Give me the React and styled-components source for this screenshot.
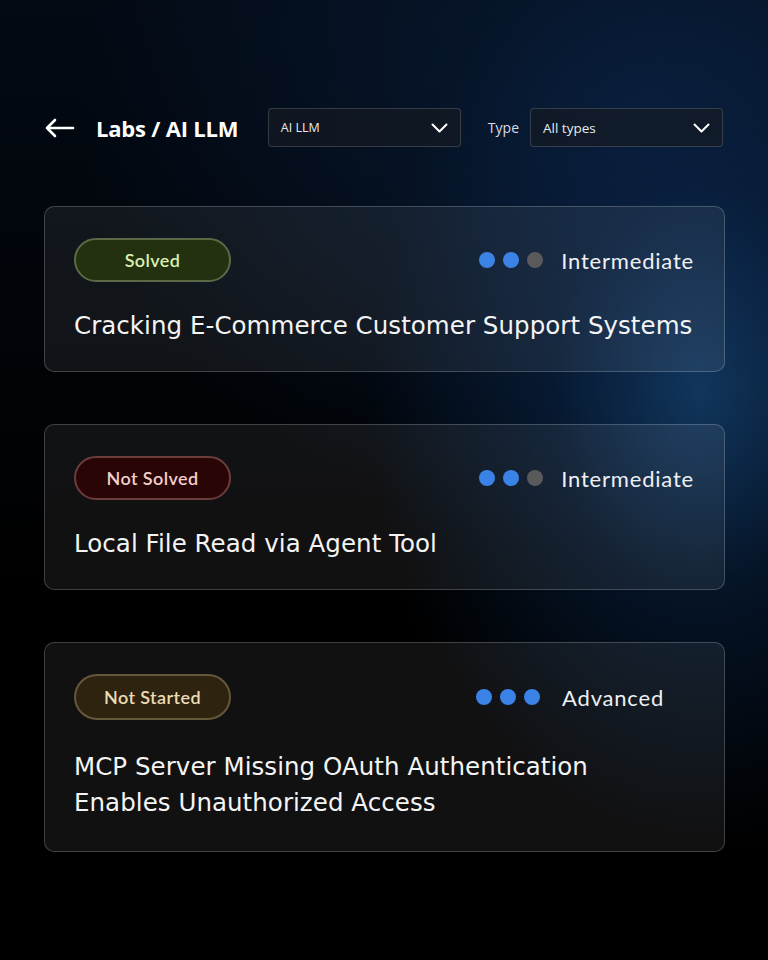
import styled, { createGlobalStyle } from 'styled-components'

const GlobalStyle = createGlobalStyle`
  html, body {
    margin: 0;
    padding: 0;
    background: #000;
  }
  * { box-sizing: border-box; }
`

const labs = [
  {
    status: 'solved',
    label: 'Solved',
    level: 2,
    levelName: 'Intermediate',
    title: 'Cracking E-Commerce Customer Support Systems',
  },
  {
    status: 'failed',
    label: 'Not Solved',
    level: 2,
    levelName: 'Intermediate',
    title: 'Local File Read via Agent Tool',
  },
  {
    status: 'pending',
    label: 'Not Started',
    level: 3,
    levelName: 'Advanced',
    title: 'MCP Server Missing OAuth Authentication Enables Unauthorized Access',
  },
]

const badgeColors = {
  solved: { bg: '#233110', border: '#5b6a45', text: '#d9efb0' },
  failed: { bg: '#2a0505', border: '#6b3d3b', text: '#f2cfcc' },
  pending: { bg: '#2e230f', border: '#65573a', text: '#eadbb6' },
}

const Page = styled.div`
  width: 768px;
  height: 960px;
  padding: 108px 43px 0 44px;
  font-family: 'Open Sans', 'Liberation Sans', sans-serif;
  color: #fff;
  background:
    radial-gradient(ellipse 330px 460px at 700px 390px, rgba(20, 64, 110, 0.8) 0%, rgba(10, 38, 75, 0.5) 45%, rgba(0, 0, 0, 0) 100%),
    radial-gradient(ellipse 560px 440px at 640px 110px, rgba(10, 32, 64, 0.75) 0%, rgba(0, 0, 0, 0) 100%),
    linear-gradient(180deg, #030a14 0%, #000 60%, #000 100%);
`

const Header = styled.header`
  display: flex;
  align-items: center;
  justify-content: space-between;
  height: 39px;
  padding-right: 2px;
  margin-bottom: 59px;
`

const TitleGroup = styled.div`
  display: flex;
  align-items: center;
  gap: 21px;
`

const BackButton = styled.button`
  display: flex;
  align-items: center;
  padding: 0 0 0 1px;
  background: none;
  border: none;
  cursor: pointer;
`

const PageTitle = styled.h1`
  margin: 0;
  font-family: 'Open Sans', sans-serif;
  font-size: 22px;
  font-weight: 700;
  letter-spacing: -0.2px;
`

const Filters = styled.div`
  display: flex;
  align-items: center;
`

const FilterLabel = styled.span`
  font-size: 14px;
  color: #d8dce2;
  margin: 0 11px 0 27px;
`

const Select = styled.div`
  display: flex;
  align-items: center;
  justify-content: space-between;
  width: 193px;
  height: 39px;
  padding: 0 12px 0 12px;
  border: 1px solid rgba(255, 255, 255, 0.16);
  border-radius: 4px;
  background: rgba(20, 26, 34, 0.7);
  font-size: ${({ $small }) => ($small ? '12.5px' : '13.5px')};
  color: #e8ebef;
`

const List = styled.div`
  display: flex;
  flex-direction: column;
  gap: 52px;
`

const Card = styled.article`
  padding: 31px 30px ${({ $tall }) => ($tall ? 30 : 27)}px 29px;
  border: 1px solid rgba(255, 255, 255, 0.2);
  border-radius: 10px;
  background: rgba(255, 255, 255, 0.065);
`

const CardTop = styled.div`
  display: flex;
  align-items: center;
  justify-content: space-between;
  margin-bottom: ${({ $tall }) => ($tall ? 29 : 26)}px;
`

const Badge = styled.span`
  display: flex;
  align-items: center;
  justify-content: center;
  width: 157px;
  height: ${({ $tall }) => ($tall ? 46 : 44)}px;
  border-radius: 23px;
  font-family: 'Lato', sans-serif;
  font-size: 18px;
  font-weight: 600;
  letter-spacing: 0.4px;
  background: ${({ $status }) => badgeColors[$status].bg};
  border: 2px solid ${({ $status }) => badgeColors[$status].border};
  color: ${({ $status }) => badgeColors[$status].text};
`

const Level = styled.div`
  display: flex;
  align-items: center;
  margin-right: ${({ $right }) => $right}px;
`

const Dots = styled.div`
  display: flex;
  gap: 8px;
  margin-right: ${({ $wide }) => ($wide ? 22 : 18)}px;
`

const Dot = styled.span`
  width: 16px;
  height: 16px;
  border-radius: 50%;
  background: ${({ $on }) => ($on ? '#3b82e6' : '#5a5a5a')};
`

const LevelName = styled.span`
  font-family: 'Lato', sans-serif;
  font-size: 22px;
  letter-spacing: 0.8px;
  color: #eef0f3;
`

const CardTitle = styled.h2`
  margin: 0;
  font-family: 'DejaVu Sans', 'Open Sans', sans-serif;
  font-size: 24.5px;
  font-weight: 400;
  line-height: 36px;
  letter-spacing: 0.05px;
  color: #f4f4f4;
  white-space: ${({ $narrow }) => ($narrow ? 'normal' : 'nowrap')};
  max-width: ${({ $narrow }) => ($narrow ? '540px' : 'none')};
`

function Chevron() {
  return (
    <svg width="17" height="10" viewBox="0 0 17 10" fill="none">
      <path d="M1.5 1.5L8.5 8.5L15.5 1.5" stroke="#fff" strokeWidth="2" strokeLinecap="round" strokeLinejoin="round" />
    </svg>
  )
}

function ArrowLeft() {
  return (
    <svg width="30" height="20" viewBox="0 0 30 20" fill="none">
      <path d="M28 10H2M10 2L2 10L10 18" stroke="#fff" strokeWidth="2.6" strokeLinecap="round" strokeLinejoin="round" />
    </svg>
  )
}

export default function App() {
  return (
    <>
      <GlobalStyle />
      <Page>
        <Header>
          <TitleGroup>
            <BackButton aria-label="Back">
              <ArrowLeft />
            </BackButton>
            <PageTitle>Labs / AI LLM</PageTitle>
          </TitleGroup>
          <Filters>
            <Select $small>
              AI LLM
              <Chevron />
            </Select>
            <FilterLabel>Type</FilterLabel>
            <Select>
              All types
              <Chevron />
            </Select>
          </Filters>
        </Header>

        <List>
          {labs.map((lab) => {
            const tall = lab.status === 'pending'
            return (
              <Card key={lab.title} $tall={tall}>
                <CardTop $tall={tall}>
                  <Badge $status={lab.status} $tall={tall}>{lab.label}</Badge>
                  <Level $right={tall ? 30 : 0}>
                    <Dots $wide={tall}>
                      {[1, 2, 3].map((n) => (
                        <Dot key={n} $on={n <= lab.level} />
                      ))}
                    </Dots>
                    <LevelName>{lab.levelName}</LevelName>
                  </Level>
                </CardTop>
                <CardTitle $narrow={tall}>{lab.title}</CardTitle>
              </Card>
            )
          })}
        </List>
      </Page>
    </>
  )
}
